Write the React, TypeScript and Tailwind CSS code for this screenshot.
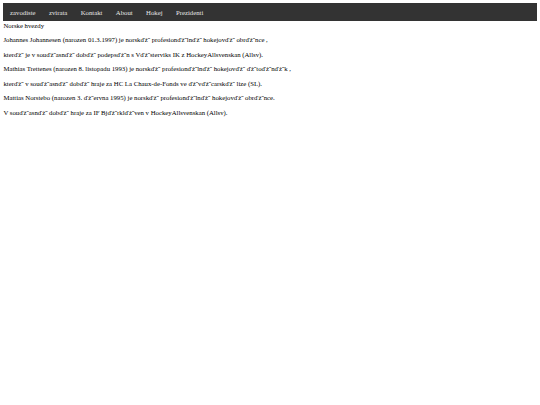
import React from "react";

const items = ["zavodiste", "zvirata", "Kontakt", "About", "Hokej", "Prezidenti"];
const B = "ďż˝";

const paras = [
  `Johannes Johannesen (narozen 01.3.1997) je norsk${B} profesion${B}ln${B} hokejov${B} obr${B}nce ,`,
  `kter${B} je v sou${B}asn${B} dob${B} podeps${B}n s V${B}sterviks IK z HockeyAllsvenskan (Allsv).`,
  `Mathias Trettenes (narozen 8. listopadu 1993) je norsk${B} profesion${B}ln${B} hokejov${B} ${B}to${B}n${B}k ,`,
  `kter${B} v sou${B}asn${B} dob${B} hraje za HC La Chaux-de-Fonds ve ${B}v${B}carsk${B} lize (SL).`,
  `Mattias Norstebo (narozen 3. ${B}ervna 1995) je norsk${B} profesion${B}ln${B} hokejov${B} obr${B}nce.`,
  `V sou${B}asn${B} dob${B} hraje za IF Bj${B}rkl${B}ven v HockeyAllsvenskan (Allsv).`,
];

export default function App() {
  return (
    <div
      className="w-[540px] h-[405px] bg-white px-[3.4px] pt-[3.4px] text-[6.75px] leading-[1.15] text-black"
      style={{ fontFamily: '"Liberation Serif", "Times New Roman", serif' }}
    >
      <ul className="flex bg-[#333333] h-[18px] items-center">
        {items.map((t) => (
          <li key={t} className="px-[6.7px] text-[#e6e6e6]">
            {t}
          </li>
        ))}
      </ul>
      <div className="mt-[0.5px]">Norske hvezdy</div>
      {paras.map((p, i) => (
        <p key={i} className="my-[6.75px]">
          {p}
        </p>
      ))}
    </div>
  );
}
